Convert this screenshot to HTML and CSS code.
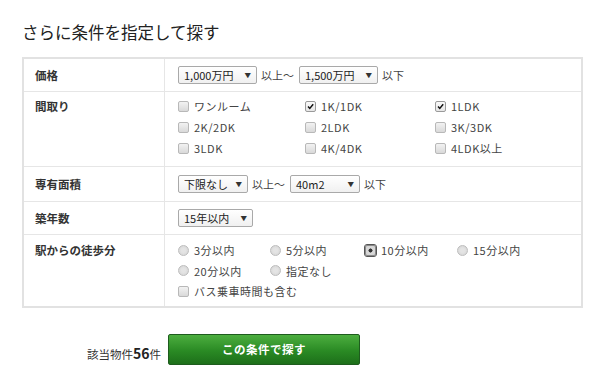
FILE: index.html
```
<!DOCTYPE html>
<html lang="ja">
<head>
    <meta charset="UTF-8">
    <title>さらに条件を指定して探す</title>
    <link rel="stylesheet" href="styles.css">
</head>
<body>
    <div class="search">
        <h2 class="search-title">さらに条件を指定して探す</h2>

        <!-- 条件テーブル -->
        <div class="cond">
            <div class="cond-row row-price">
                <div class="cond-head">価格</div>
                <div class="cond-body">
                    <span class="sel w79">1,000万円<i>▼</i></span>
                    <span class="txt">以上～</span>
                    <span class="sel w79">1,500万円<i>▼</i></span>
                    <span class="txt">以下</span>
                </div>
            </div>

            <div class="cond-row row-madori">
                <div class="cond-head">間取り</div>
                <div class="cond-body grid-madori">
                    <label class="opt"><span class="cb"></span>ワンルーム</label>
                    <label class="opt"><span class="cb checked"><svg viewBox="0 0 11 11"><path d="M2.5 5.5 L4.6 7.8 L8.8 2.8" /></svg></span>1K/1DK</label>
                    <label class="opt"><span class="cb checked"><svg viewBox="0 0 11 11"><path d="M2.5 5.5 L4.6 7.8 L8.8 2.8" /></svg></span>1LDK</label>
                    <label class="opt"><span class="cb"></span>2K/2DK</label>
                    <label class="opt"><span class="cb"></span>2LDK</label>
                    <label class="opt"><span class="cb"></span>3K/3DK</label>
                    <label class="opt"><span class="cb"></span>3LDK</label>
                    <label class="opt"><span class="cb"></span>4K/4DK</label>
                    <label class="opt"><span class="cb"></span>4LDK以上</label>
                </div>
            </div>

            <div class="cond-row row-area">
                <div class="cond-head">専有面積</div>
                <div class="cond-body">
                    <span class="sel w70">下限なし<i>▼</i></span>
                    <span class="txt">以上～</span>
                    <span class="sel w70">40m2<i>▼</i></span>
                    <span class="txt">以下</span>
                </div>
            </div>

            <div class="cond-row row-age">
                <div class="cond-head">築年数</div>
                <div class="cond-body">
                    <span class="sel w75">15年以内<i>▼</i></span>
                </div>
            </div>

            <div class="cond-row row-walk">
                <div class="cond-head">駅からの徒歩分</div>
                <div class="cond-body grid-walk">
                    <label class="opt"><span class="rd"></span>3分以内</label>
                    <label class="opt"><span class="rd"></span>5分以内</label>
                    <label class="opt"><span class="rd on"></span>10分以内</label>
                    <label class="opt"><span class="rd"></span>15分以内</label>
                    <label class="opt"><span class="rd"></span>20分以内</label>
                    <label class="opt span3"><span class="rd"></span>指定なし</label>
                    <label class="opt span4"><span class="cb"></span>バス乗車時間も含む</label>
                </div>
            </div>
        </div>

        <!-- 件数とボタン -->
        <div class="result">
            <span class="count">該当物件<b>56</b>件</span>
            <button class="search-btn">この条件で探す</button>
        </div>
    </div>
</body>
</html>
```
FILE: styles.css
```
body {
    margin: 0;
    background: #fff;
    font-family: "Noto Sans CJK JP", "Liberation Sans", sans-serif;
    color: #333;
}

.search {
    padding: 21px 17px 0 22px;
}

.search-title {
    margin: 0 0 14px;
    font-size: 16.5px;
    font-weight: normal;
    line-height: 22px;
    color: #222;
}

/* Table */
.cond {
    border: 2px solid #e2e2e2;
    width: 557px;
}

.cond-row {
    display: grid;
    grid-template-columns: 141px 1fr;
    border-top: 1px solid #e6e6e6;
}

.cond-row:first-child {
    border-top: none;
}

.cond-head {
    padding-left: 11px;
    border-right: 1px solid #e6e6e6;
    font-size: 11.5px;
    font-weight: bold;
    color: #333;
}

.cond-body {
    padding-left: 13px;
    font-size: 11px;
    display: flex;
    align-items: center;
}

.row-price .cond-head,
.row-price .cond-body {
    padding-top: 7px;
    padding-bottom: 7px;
    line-height: 18px;
}

.row-area .cond-head,
.row-area .cond-body {
    padding-top: 8px;
    padding-bottom: 8px;
    line-height: 18px;
}

.row-age .cond-head,
.row-age .cond-body {
    padding-top: 7px;
    padding-bottom: 7px;
    line-height: 18px;
}

.row-madori .cond-head,
.row-madori .cond-body {
    padding-top: 4px;
    padding-bottom: 7px;
    line-height: 21px;
}

.row-walk .cond-head,
.row-walk .cond-body {
    padding-top: 5px;
    padding-bottom: 4px;
    line-height: 20.5px;
}

/* Select boxes */
.sel {
    display: inline-flex;
    align-items: center;
    justify-content: space-between;
    box-sizing: border-box;
    height: 18px;
    padding: 0 5px 0 5px;
    border: 1px solid #a9a9a9;
    border-radius: 2px;
    background: linear-gradient(#fff, #f0f0f0);
    font-size: 11px;
    color: #222;
    line-height: 16px;
}

.sel i {
    font-style: normal;
    font-size: 6.5px;
    color: #333;
}

.w79 { width: 79px; }
.w70 { width: 70px; }
.w75 { width: 75px; }

.txt {
    margin: 0 5px 0 4px;
    color: #444;
}

/* Options */
.grid-madori {
    display: grid;
    grid-template-columns: 127px 130px 1fr;
}

.grid-walk {
    display: grid;
    grid-template-columns: 92px 95px 92px 1fr;
}

.span3 { grid-column: span 3; }
.span4 { grid-column: span 4; }

.opt {
    display: flex;
    align-items: center;
    gap: 5px;
    color: #444;
    letter-spacing: 0.5px;
}

.cb {
    width: 11px;
    height: 11px;
    box-sizing: border-box;
    border: 1px solid #b8b8b8;
    border-radius: 2px;
    background: linear-gradient(#f2f2f2, #d9d9d9);
    flex-shrink: 0;
    display: flex;
}

.cb.checked {
    background: linear-gradient(#fafafa, #e6e6e6);
    border-color: #9a9a9a;
}

.cb svg {
    width: 9px;
    height: 9px;
}

.cb path {
    fill: none;
    stroke: #111;
    stroke-width: 1.8;
}

.rd {
    width: 11px;
    height: 11px;
    box-sizing: border-box;
    border: 1px solid #bdbdbd;
    border-radius: 50%;
    background: radial-gradient(circle, #e4e4e4 30%, #d2d2d2 100%);
    flex-shrink: 0;
}

.rd.on {
    background: radial-gradient(circle, #333 28%, #dcdcdc 36%, #cfcfcf 100%);
    border-color: #8a8a8a;
    outline: 1px solid #555;
    border-radius: 2px;
}

/* Result */
.result {
    display: flex;
    align-items: center;
    padding: 26px 0 0 65px;
}

.count {
    font-size: 11.5px;
    color: #333;
    margin-right: 7px;
    margin-top: 8px;
}

.count b {
    font-size: 14px;
    font-weight: bold;
    color: #222;
}

.search-btn {
    width: 192px;
    height: 31px;
    border: 1px solid #1e5c1e;
    border-radius: 2px;
    background: linear-gradient(#4cae3f, #2a8a24 55%, #1d6f1a);
    color: #fff;
    font-family: "Noto Sans CJK JP", sans-serif;
    font-size: 11.5px;
    font-weight: bold;
    letter-spacing: 0.5px;
    cursor: pointer;
}
```
